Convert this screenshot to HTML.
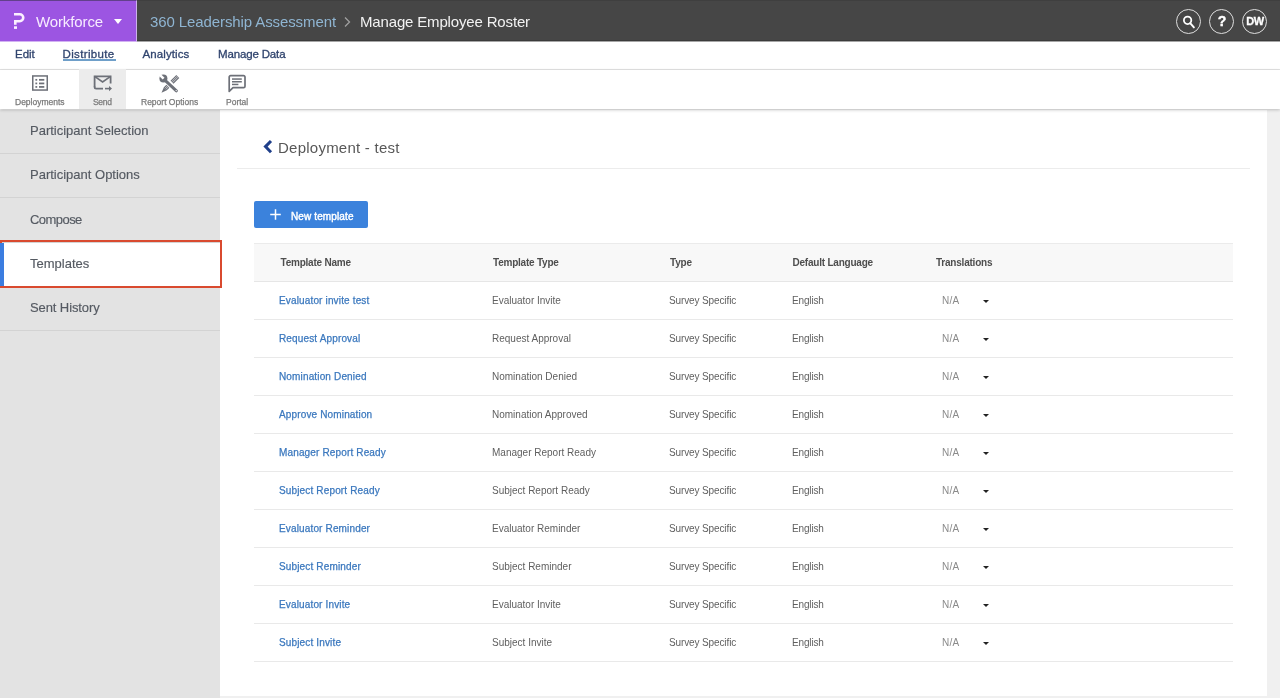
<!DOCTYPE html>
<html><head><meta charset="utf-8">
<style>
*{margin:0;padding:0;box-sizing:border-box}
html,body{width:1280px;height:698px;overflow:hidden;background:#f0f0f0;font-family:"Liberation Sans",sans-serif}
body{will-change:transform}
.abs{position:absolute;white-space:nowrap}
#top{position:absolute;left:0;top:0;width:1280px;height:41px;background:#464646;border-bottom:1px solid #3b3b3b;border-top:1px solid #3f3f3f}
#brand{position:absolute;left:0;top:0;width:137px;height:41px;background:#9c55e2;border-right:1px solid #cdb0ec;border-top:1px solid #62408c}
#nav{position:absolute;left:0;top:41px;width:1280px;height:29px;background:#fff;border-bottom:1px solid #e4e4e4}
.nav{position:absolute;top:46.8px;font-size:11.5px;-webkit-text-stroke:.3px #30446e;color:#30446e;line-height:14px}
#tool{position:absolute;left:0;top:70px;width:1280px;height:39px;background:#fff;box-shadow:0 1px 3px rgba(0,0,0,.22);z-index:2}
.tl{position:absolute;top:96.8px;font-size:8.5px;color:#7a7a7a;-webkit-text-stroke:.25px #7a7a7a;line-height:10px;z-index:3}
#side{position:absolute;left:0;top:110px;width:220px;height:588px;background:#e3e3e3}
.si{position:absolute;left:0;width:220px;height:44px;border-bottom:1px solid #d3d3d3}
.st{position:absolute;left:30px;top:13px;font-size:13px;color:#555a62;-webkit-text-stroke:.15px #555a62;line-height:16px}
#main{position:absolute;left:220px;top:110px;width:1047px;height:586px;background:#fff}
.th{position:absolute;top:257px;font-size:10px;font-weight:bold;color:#4e4e4e;line-height:12px;letter-spacing:-.22px}
.row{position:absolute;left:254px;width:979px;height:38px;border-bottom:1px solid #e9e9e9}
.c{position:absolute;top:13px;font-size:10px;line-height:12px;white-space:nowrap}
.c1{left:25px;letter-spacing:.15px;color:#3b78be;-webkit-text-stroke:.25px #3b78be}
.c2{left:238px;color:#5f5f5f}
.c3{left:415px;color:#5f5f5f;letter-spacing:-.12px}
.c4{left:538px;color:#5f5f5f;letter-spacing:-.15px}
.c5{left:688px;color:#8a8a8a;letter-spacing:.2px}
.arr{position:absolute;left:729px;top:17.5px;width:0;height:0;border-left:3px solid transparent;border-right:3px solid transparent;border-top:3.5px solid #222}
</style></head><body>
<div id="top"></div>
<div id="brand"></div>
<svg class="abs" style="left:0;top:0" width="40" height="42" viewBox="0 0 40 42">
<path d="M14 14.3 H19.8 A3.45 3.45 0 0 1 19.8 21.2 H15.3 V24.7" fill="none" stroke="#fbf0ff" stroke-width="2.6"/>
<rect x="14" y="26.3" width="3" height="2.6" fill="#fbf0ff"/>
</svg>
<div class="abs" style="left:36px;top:13px;font-size:15px;color:#f7ecff;line-height:18px;letter-spacing:-.12px">Workforce</div>
<div class="abs" style="left:114px;top:19px;width:0;height:0;border-left:4.5px solid transparent;border-right:4.5px solid transparent;border-top:5px solid #fff"></div>
<div class="abs" style="left:150px;top:12.5px;font-size:15px;color:#8fb5d2;line-height:18px;letter-spacing:-.1px">360 Leadership Assessment</div>
<svg class="abs" style="left:343px;top:16px" width="9" height="12" viewBox="0 0 9 12"><path d="M2 1.5 L6.5 6 L2 10.5" fill="none" stroke="#a0a0a0" stroke-width="1.3"/></svg>
<div class="abs" style="left:360px;top:12.5px;font-size:15px;color:#f2f2f2;line-height:18px;letter-spacing:-.16px">Manage Employee Roster</div>
<div class="abs" style="left:1176px;top:9px;width:25px;height:25px;border:1.6px solid #dedede;border-radius:50%"></div>
<svg class="abs" style="left:1182px;top:15px" width="14" height="14" viewBox="0 0 14 14"><circle cx="5.6" cy="5.35" r="3.7" fill="none" stroke="#fff" stroke-width="1.8"/><path d="M8.4 8.3 L11.9 12.4" stroke="#fff" stroke-width="1.9" stroke-linecap="round"/></svg>
<div class="abs" style="left:1209px;top:9px;width:25px;height:25px;border:1.6px solid #dedede;border-radius:50%"></div>
<div class="abs" style="left:1209.5px;top:13px;width:25px;text-align:center;font-size:14px;font-weight:bold;color:#fff;-webkit-text-stroke:.4px #fff;line-height:17px">?</div>
<div class="abs" style="left:1242px;top:9px;width:25px;height:25px;border:1.6px solid #dedede;border-radius:50%"></div>
<div class="abs" style="left:1242.5px;top:14px;width:25px;text-align:center;font-size:11px;font-weight:bold;color:#fff;-webkit-text-stroke:.3px #fff;line-height:15px;letter-spacing:-.4px">DW</div>

<div id="nav"></div>
<div class="abs" style="left:0;top:41px;width:137px;height:1px;background:rgba(156,85,226,.45)"></div>
<div class="abs" style="left:137px;top:41px;width:1143px;height:1px;background:rgba(58,58,58,.45)"></div>
<div class="nav" style="left:15px;letter-spacing:0px">Edit</div>
<div class="nav" style="left:62.5px;letter-spacing:.35px">Distribute</div>
<div class="abs" style="left:62.5px;top:59px;width:53px;height:2px;background:#6f9fc9"></div>
<div class="nav" style="left:142.5px;letter-spacing:.1px">Analytics</div>
<div class="nav" style="left:218px;letter-spacing:-.15px">Manage Data</div>

<div id="tool"></div>
<div class="abs" style="left:79px;top:69px;width:47px;height:40px;background:#ececec;z-index:2"></div>
<svg class="abs" style="left:31px;top:74px;z-index:3" width="18" height="18" viewBox="0 0 18 18">
<rect x="1.75" y="1.95" width="14.5" height="14.1" fill="none" stroke="#6d7078" stroke-width="1.5"/>
<rect x="4.4" y="4.95" width="1.8" height="1.75" fill="#6d7078"/><rect x="8" y="4.95" width="5.3" height="1.75" fill="#6d7078"/>
<rect x="4.4" y="8.55" width="1.8" height="1.75" fill="#6d7078"/><rect x="8" y="8.55" width="5.3" height="1.75" fill="#6d7078"/>
<rect x="4.4" y="12.05" width="1.8" height="1.75" fill="#6d7078"/><rect x="8" y="12.05" width="5.3" height="1.75" fill="#6d7078"/>
</svg>
<svg class="abs" style="left:92px;top:74px;z-index:3" width="22" height="19" viewBox="0 0 22 19">
<path d="M2.6 12.6 V2.4 H18.6 V9.4" fill="none" stroke="#6d7078" stroke-width="1.8"/>
<path d="M2.6 2.4 L10.6 8 L18.6 2.4" fill="none" stroke="#6d7078" stroke-width="1.6"/>
<path d="M2.6 12 V13 A1.6 1.6 0 0 0 4.2 14.6 H11" fill="none" stroke="#6d7078" stroke-width="1.8"/>
<path d="M13 14.6 H18" fill="none" stroke="#6d7078" stroke-width="1.6"/>
<path d="M17 12 L20 14.6 L17 17.2 Z" fill="#6d7078"/>
</svg>
<svg class="abs" style="left:150px;top:70px;z-index:3" width="40" height="26" viewBox="0 0 40 26">
<g transform="translate(27.8,6.4) rotate(135)">
<rect x="0" y="-2.1" width="8.2" height="4.2" fill="#6d7078"/>
<path d="M14 -2.1 H17.6 L23 0 L17.6 2.1 H14 Z" fill="#6d7078"/>
<path d="M0.4 -0.7 H8.2 M0.4 0.7 H8.2 M14 -0.7 H17.6 M14 0.7 H17.6" stroke="#f0f1f3" stroke-width="0.6"/>
</g>
<path d="M13.5 8.8 L26.4 20.8" stroke="#6d7078" stroke-width="3" stroke-linecap="round"/>
<circle cx="13.4" cy="8.4" r="4" fill="#6d7078"/>
<path d="M13.6 8.6 L9.6 4.6" stroke="#fff" stroke-width="2.6"/>
<circle cx="26.2" cy="20.6" r="0.7" fill="#fff"/>
</svg>
<svg class="abs" style="left:227px;top:74px;z-index:3" width="20" height="19" viewBox="0 0 20 19">
<path d="M2.2 3 A1.4 1.4 0 0 1 3.6 1.6 H16.6 A1.4 1.4 0 0 1 18 3 V12.2 A1.4 1.4 0 0 1 16.6 13.6 H6 L2.2 17.4 Z" fill="none" stroke="#6d7078" stroke-width="1.7" stroke-linejoin="round"/>
<rect x="5" y="4.3" width="9.8" height="1.5" fill="#6d7078"/>
<rect x="5" y="7" width="9.8" height="1.5" fill="#6d7078"/>
<rect x="5" y="9.7" width="6.4" height="1.5" fill="#6d7078"/>
</svg>
<div class="tl" style="left:15px">Deployments</div>
<div class="tl" style="left:93px;letter-spacing:-.3px">Send</div>
<div class="tl" style="left:141px">Report Options</div>
<div class="tl" style="left:226px">Portal</div>

<div id="side">
<div class="si" style="top:0"><div class="st">Participant Selection</div></div>
<div class="si" style="top:44px"><div class="st">Participant Options</div></div>
<div class="si" style="top:88px;height:45px"><div class="st" style="top:14px;letter-spacing:-.55px">Compose</div></div>
<div class="si" style="top:133px;background:#fff"><div class="st">Templates</div></div>
<div class="si" style="top:177px"><div class="st" style="letter-spacing:-.1px">Sent History</div></div>
</div>
<div class="abs" style="left:0;top:240px;width:222px;height:48px;border:2.5px solid #d94a2f;z-index:4"></div>
<div class="abs" style="left:0;top:242.5px;width:4px;height:43px;background:#3b7de0;z-index:5"></div>

<div id="main"></div>
<svg class="abs" style="left:262px;top:139px" width="12" height="16" viewBox="0 0 12 16"><path d="M9 2 L3.5 7.6 L9 13.2" fill="none" stroke="#1f3f8a" stroke-width="3"/></svg>
<div class="abs" style="left:278px;top:139px;font-size:15px;color:#585858;line-height:18px;letter-spacing:.24px">Deployment - test</div>
<div class="abs" style="left:237px;top:168px;width:1013px;height:1px;background:#ececec"></div>
<div class="abs" style="left:254px;top:201px;width:114px;height:27px;background:#3b82dc;border-radius:2px"></div>
<svg class="abs" style="left:269px;top:208px" width="13" height="13" viewBox="0 0 13 13"><path d="M6.5 1.2 V11.8 M1.2 6.5 H11.8" stroke="#fff" stroke-width="1.5"/></svg>
<div class="abs" style="left:291px;top:210.5px;font-size:10px;color:#fff;-webkit-text-stroke:.4px #fff;line-height:12px;letter-spacing:.12px">New template</div>

<div class="abs" style="left:254px;top:243px;width:979px;height:39px;background:#f8f8f8;border-top:1px solid #ebebeb;border-bottom:1px solid #e6e6e6"></div>
<div class="th" style="left:280.5px">Template Name</div>
<div class="th" style="left:493px">Template Type</div>
<div class="th" style="left:670px">Type</div>
<div class="th" style="left:792.5px">Default Language</div>
<div class="th" style="left:936px">Translations</div>
<div class="row" style="top:282px"><div class="c c1">Evaluator invite test</div><div class="c c2">Evaluator Invite</div><div class="c c3">Survey Specific</div><div class="c c4">English</div><div class="c c5">N/A</div><div class="arr"></div></div>
<div class="row" style="top:320px"><div class="c c1">Request Approval</div><div class="c c2">Request Approval</div><div class="c c3">Survey Specific</div><div class="c c4">English</div><div class="c c5">N/A</div><div class="arr"></div></div>
<div class="row" style="top:358px"><div class="c c1">Nomination Denied</div><div class="c c2">Nomination Denied</div><div class="c c3">Survey Specific</div><div class="c c4">English</div><div class="c c5">N/A</div><div class="arr"></div></div>
<div class="row" style="top:396px"><div class="c c1">Approve Nomination</div><div class="c c2">Nomination Approved</div><div class="c c3">Survey Specific</div><div class="c c4">English</div><div class="c c5">N/A</div><div class="arr"></div></div>
<div class="row" style="top:434px"><div class="c c1">Manager Report Ready</div><div class="c c2">Manager Report Ready</div><div class="c c3">Survey Specific</div><div class="c c4">English</div><div class="c c5">N/A</div><div class="arr"></div></div>
<div class="row" style="top:472px"><div class="c c1">Subject Report Ready</div><div class="c c2">Subject Report Ready</div><div class="c c3">Survey Specific</div><div class="c c4">English</div><div class="c c5">N/A</div><div class="arr"></div></div>
<div class="row" style="top:510px"><div class="c c1">Evaluator Reminder</div><div class="c c2">Evaluator Reminder</div><div class="c c3">Survey Specific</div><div class="c c4">English</div><div class="c c5">N/A</div><div class="arr"></div></div>
<div class="row" style="top:548px"><div class="c c1">Subject Reminder</div><div class="c c2">Subject Reminder</div><div class="c c3">Survey Specific</div><div class="c c4">English</div><div class="c c5">N/A</div><div class="arr"></div></div>
<div class="row" style="top:586px"><div class="c c1">Evaluator Invite</div><div class="c c2">Evaluator Invite</div><div class="c c3">Survey Specific</div><div class="c c4">English</div><div class="c c5">N/A</div><div class="arr"></div></div>
<div class="row" style="top:624px"><div class="c c1">Subject Invite</div><div class="c c2">Subject Invite</div><div class="c c3">Survey Specific</div><div class="c c4">English</div><div class="c c5">N/A</div><div class="arr"></div></div>
</body></html>
